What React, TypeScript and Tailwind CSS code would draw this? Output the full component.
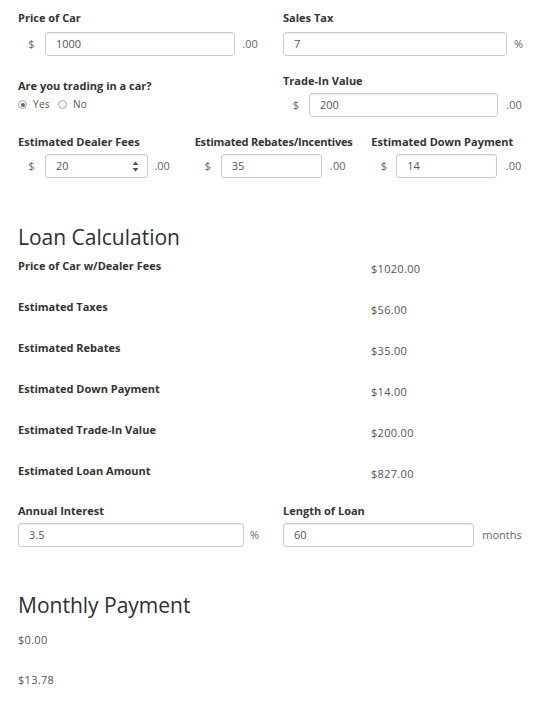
import React from "react";

const label = "block text-[11px] font-bold text-[#333] leading-4 whitespace-nowrap";
const box =
  "h-6 rounded-[3px] border border-[#ccc] bg-white px-[10px] text-[11px] text-[#555] leading-6 shadow-[inset_0_1px_1px_rgba(0,0,0,0.08)]";
const addon = "text-[11px] text-[#666] text-center";

function Field({
  value,
  pre,
  post,
  preW,
  postW,
  spinner,
}: {
  value: string;
  pre?: string;
  post?: string;
  preW: string;
  postW: string;
  spinner?: boolean;
}) {
  return (
    <div className="flex items-center">
      {pre ? <span className={`${addon} ${preW}`}>{pre}</span> : null}
      <div className={`${box} flex-1 flex items-center justify-between`}>
        <span>{value}</span>
        {spinner && (
          <svg width="7" height="11" viewBox="0 0 7 11" className="mr-[-2px]">
            <path d="M3.5 0.5 L6.5 4 L0.5 4 Z" fill="#555" />
            <path d="M3.5 10.5 L6.5 7 L0.5 7 Z" fill="#555" />
          </svg>
        )}
      </div>
      {post ? <span className={`${addon} ${postW}`}>{post}</span> : null}
    </div>
  );
}

function Radio({ checked, text }: { checked?: boolean; text: string }) {
  return (
    <span className="flex items-center gap-[6px] text-[10px] text-[#555] tracking-[0.3px]">
      <span className="w-[9px] h-[9px] rounded-full border border-[#aaa] bg-[#f4f4f4] flex items-center justify-center">
        {checked && <span className="w-[4px] h-[4px] rounded-full bg-[#666]" />}
      </span>
      {text}
    </span>
  );
}

const summary = [
  ["Price of Car w/Dealer Fees", "$1020.00"],
  ["Estimated Taxes", "$56.00"],
  ["Estimated Rebates", "$35.00"],
  ["Estimated Down Payment", "$14.00"],
  ["Estimated Trade-In Value", "$200.00"],
  ["Estimated Loan Amount", "$827.00"],
];

export default function App() {
  return (
    <div
      className="w-[550px] h-[705px] bg-white overflow-hidden pl-[18px] pr-[20px] pt-[10px]"
      style={{ fontFamily: '"Open Sans", "DejaVu Sans", sans-serif' }}
    >
      <div className="grid grid-cols-2 gap-x-[18px]">
        <div>
          <span className={label}>Price of Car</span>
          <div className="mt-[6px]">
            <Field value="1000" pre="$" post=".00" preW="w-[27px]" postW="w-[30px]" />
          </div>
        </div>
        <div>
          <span className={label}>Sales Tax</span>
          <div className="mt-[6px]">
            <Field value="7" post="%" preW="" postW="w-[23px]" />
          </div>
        </div>
        <div className="mt-[22px]">
          <span className={label}>Are you trading in a car?</span>
          <div className="mt-[3px] flex items-center gap-[8px]">
            <Radio checked text="Yes" />
            <Radio text="No" />
          </div>
        </div>
        <div className="mt-[17px]">
          <span className={label}>Trade-In Value</span>
          <div className="mt-[4px]">
            <Field value="200" pre="$" post=".00" preW="w-[26px]" postW="w-[32px]" />
          </div>
        </div>
      </div>

      <div className="grid grid-cols-3 gap-x-[18px] mt-[17px]">
        <div>
          <span className={label}>Estimated Dealer Fees</span>
          <div className="mt-[4px]">
            <Field value="20" pre="$" post=".00" preW="w-[27px]" postW="w-[29px]" spinner />
          </div>
        </div>
        <div>
          <span className={`${label} tracking-[-0.2px]`}>Estimated Rebates/Incentives</span>
          <div className="mt-[4px]">
            <Field value="35" pre="$" post=".00" preW="w-[26px]" postW="w-[31px]" />
          </div>
        </div>
        <div>
          <span className={label}>Estimated Down Payment</span>
          <div className="mt-[4px]">
            <Field value="14" pre="$" post=".00" preW="w-[25px]" postW="w-[33px]" />
          </div>
        </div>
      </div>

      <h2 className="mt-[45px] text-[21px] leading-[28px] text-[#2a2f3a]">Loan Calculation</h2>
      <div className="mt-[7px]">
        {summary.map(([k, v]) => (
          <div key={k} className="grid grid-cols-[353px_1fr] h-[41px]">
            <span className={label}>{k}</span>
            <span className="text-[11px] text-[#555] leading-4 mt-[3px] tracking-[0.3px]">{v}</span>
          </div>
        ))}
      </div>

      <div className="grid grid-cols-2 gap-x-[18px] mt-[-1px]">
        <div>
          <span className={label}>Annual Interest</span>
          <div className="mt-[4px]">
            <Field value="3.5" post="%" preW="" postW="w-[21px]" />
          </div>
        </div>
        <div>
          <span className={label}>Length of Loan</span>
          <div className="mt-[4px]">
            <Field value="60" post="months" preW="" postW="w-[56px]" />
          </div>
        </div>
      </div>

      <h2 className="mt-[44px] text-[21px] leading-[28px] text-[#2a2f3a]">Monthly Payment</h2>
      <div className="mt-[13px] text-[11px] text-[#555] leading-4 tracking-[0.3px]">$0.00</div>
      <div className="mt-[24px] text-[11px] text-[#555] leading-4 tracking-[0.3px]">$13.78</div>
    </div>
  );
}
